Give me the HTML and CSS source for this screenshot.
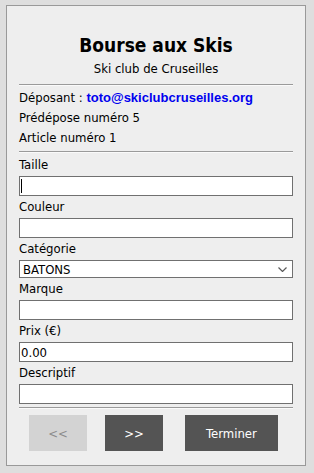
FILE: index.html
```html
<!doctype html>
<html>
	<head>
		<meta charset="utf-8">
		<title>Bourse aux Skis</title>
		<link rel="stylesheet" href="styles.css">
	</head>
	<body>
		<div class="panel">
			<h1 class="title">Bourse aux Skis</h1>
			<div class="subtitle">Ski club de Cruseilles</div>
			<hr class="rule-top">
			<div class="info">Déposant : <span class="email">toto@skiclubcruseilles.org</span></div>
			<div class="info">Prédépose numéro 5</div>
			<div class="info">Article numéro 1</div>
			<hr class="rule-mid">
			<form class="fields">
				<label class="field">
					<span class="field-label">Taille</span>
					<span class="field-box">
						<input type="text" class="field-input">
						<span class="caret"></span>
					</span>
				</label>
				<label class="field">
					<span class="field-label">Couleur</span>
					<input type="text" class="field-input">
				</label>
				<label class="field">
					<span class="field-label">Catégorie</span>
					<span class="field-box">
						<select class="field-select">
							<option>BATONS</option>
							<option>SKIS</option>
							<option>CHAUSSURES</option>
						</select>
						<svg class="chevron" width="9" height="5" viewBox="0 0 9 5">
							<path d="M0.5 0.5 L4.5 4.5 L8.5 0.5" fill="none" stroke="rgb(90,90,90)" stroke-width="1.2"/>
						</svg>
					</span>
				</label>
				<label class="field">
					<span class="field-label">Marque</span>
					<input type="text" class="field-input">
				</label>
				<label class="field">
					<span class="field-label">Prix (€)</span>
					<input type="text" class="field-input" value="0.00">
				</label>
				<label class="field">
					<span class="field-label">Descriptif</span>
					<input type="text" class="field-input">
				</label>
			</form>
			<hr class="rule-bottom">
			<div class="buttons">
				<button type="button" class="btn btn-prev" disabled>&lt;&lt;</button>
				<button type="button" class="btn btn-next">&gt;&gt;</button>
				<button type="button" class="btn btn-end">Terminer</button>
			</div>
		</div>
	</body>
</html>
```

FILE: styles.css
```css
body {
	margin: 0;
	background-color: rgb(222,222,222);
	font-family: "DejaVu Sans Condensed", "DejaVu Sans", sans-serif;
	font-size: 13px;
	color: rgb(0,0,0);
}

.panel {
	width: 274px;
	margin: 5px 0 0 6px;
	padding: 25px 12px 14px 12px;
	border: 1px solid rgb(153,153,153);
	background-color: rgb(238,238,238);
}

.title {
	margin: 0;
	text-align: center;
	font-family: "DejaVu Sans Condensed", "DejaVu Sans", sans-serif;
	font-size: 19px;
	font-weight: bold;
	line-height: 28px;
}

.subtitle {
	text-align: center;
	line-height: 20px;
}

hr {
	border: 0;
	border-top: 1px solid rgb(154,154,154);
	border-bottom: 1px solid rgb(250,250,250);
}

.rule-top {
	margin: 5px 0 2px 0;
}

.rule-mid {
	margin: 3px 0 4px 0;
}

.rule-bottom {
	margin: 2px 0 6px 0;
}

.info {
	line-height: 20px;
}

.email {
	font-family: "Liberation Sans", Arial, sans-serif;
	font-weight: bold;
	color: rgb(0,0,238);
}

.fields {
	margin: 0;
}

.field {
	display: block;
	margin-bottom: 3px;
}

.field-label {
	display: block;
	line-height: 16px;
	margin-bottom: 3px;
}

.field-box {
	display: block;
	position: relative;
}

.field-input, .field-select {
	display: block;
	box-sizing: border-box;
	width: 100%;
	height: 20px;
	margin: 0;
	padding: 0 1px;
	border: 1px solid rgb(112,112,112);
	border-radius: 0;
	background-color: rgb(255,255,255);
	font-family: "DejaVu Sans Condensed", "DejaVu Sans", sans-serif;
	font-size: 13px;
	color: rgb(0,0,0);
	outline: none;
}

.field-select {
	height: 18px;
	padding: 0 0 0 3px;
	appearance: none;
	-webkit-appearance: none;
}

.chevron {
	position: absolute;
	right: 6px;
	top: 7px;
	pointer-events: none;
}

.caret {
	position: absolute;
	left: 2px;
	top: 3px;
	width: 1px;
	height: 14px;
	background-color: rgb(0,0,0);
}

.buttons {
	display: flex;
	padding-left: 10px;
}

.btn {
	height: 36px;
	border: 0;
	padding: 0;
	font-family: "DejaVu Sans Condensed", "DejaVu Sans", sans-serif;
	font-size: 13px;
	color: rgb(255,255,255);
	background-color: rgb(84,84,84);
}

.btn-prev {
	width: 58px;
	color: rgb(140,140,140);
	background-color: rgb(211,211,211);
}

.btn-next {
	width: 58px;
	margin-left: 18px;
}

.btn-end {
	width: 93px;
	margin-left: 22px;
}
```
